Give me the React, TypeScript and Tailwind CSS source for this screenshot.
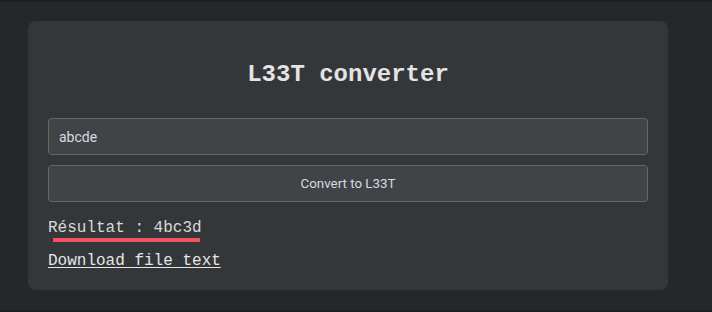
export default function App() {
  return (
    <div className="h-[312px] w-[712px] bg-[#25282a] border-t-2 border-b-2 border-[#1d1f21] pt-[19px] px-[28px] overflow-hidden">
      <div className="w-[640px] h-[269px] rounded-lg bg-[#34373a] px-5 pt-[38px]">
        <h1 className="text-center text-[24px] leading-8 font-bold text-[#e4e4e4] font-['Liberation_Mono','Courier_New',monospace]">
          L33T converter
        </h1>

        <div className="mt-[27px] flex flex-col gap-[10px] font-['Roboto','Liberation_Sans',sans-serif] text-[14px]">
          <input
            type="text"
            defaultValue="abcde"
            className="h-[37px] w-full rounded border border-[#6b655f] bg-[#414447] px-[10px] text-[#d5dbe0] outline-none"
          />
          <button className="h-[37px] w-full rounded border border-[#6b655f] bg-[#414447] text-[13.33px] text-[#d5dbe0]">
            Convert to L33T
          </button>
        </div>

        <div className="mt-[16px] font-['Liberation_Mono','Courier_New',monospace] text-[16px] leading-5 text-[#d9d9d9]">
          <p>Résultat : 4bc3d</p>
          <div className="ml-[5px] h-1 w-[147px] bg-[#f2505f]" />
          <a href="#" className="mt-[9px] inline-block text-[#e6e6e6] underline underline-offset-2">
            Download file text
          </a>
        </div>
      </div>
    </div>
  );
}
